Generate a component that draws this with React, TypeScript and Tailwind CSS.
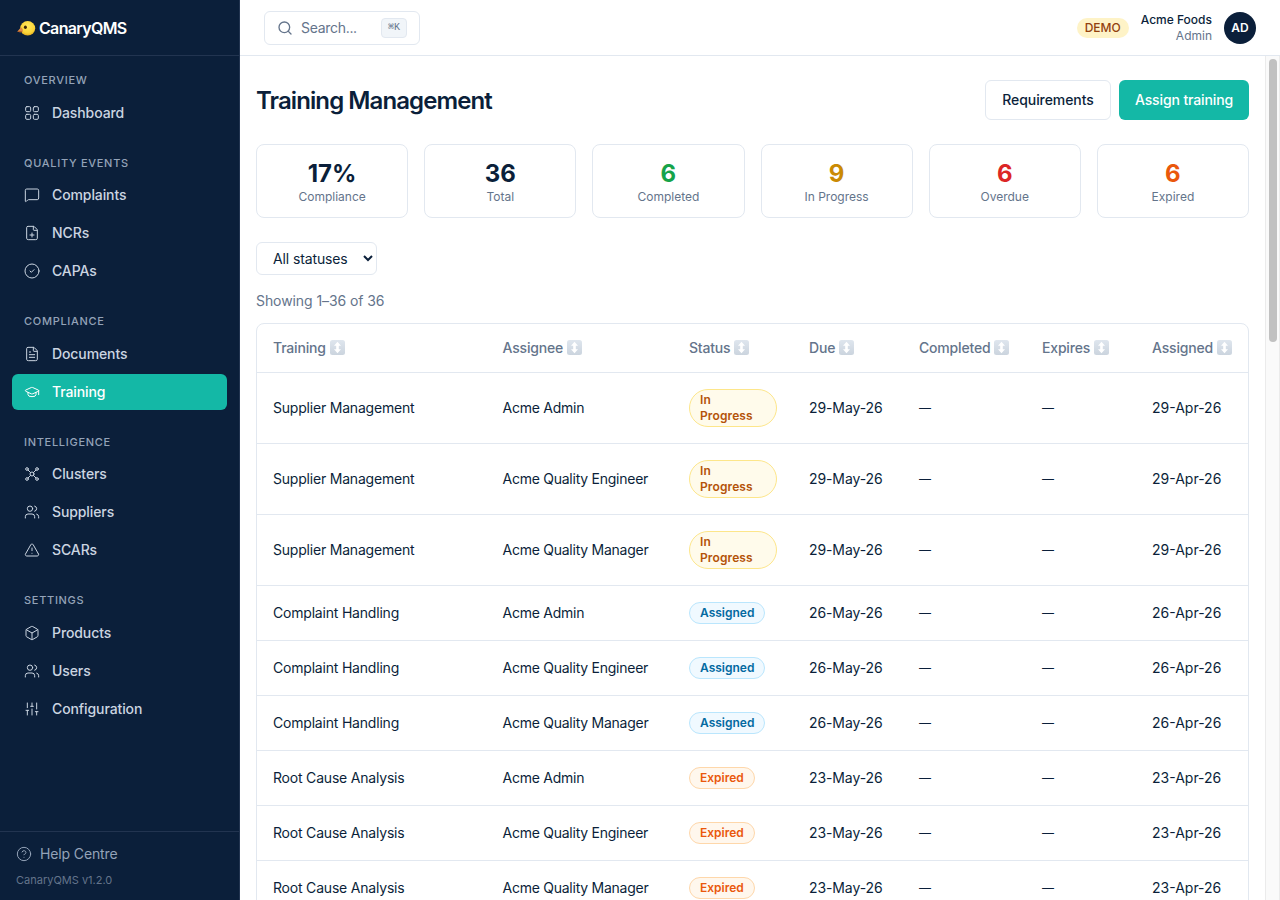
import type { ReactNode } from 'react'
import {
  Box,
  CircleHelp,
  FilePlus,
  FileText,
  GraduationCap,
  MessageSquare,
  Search,
  SlidersVertical,
  TriangleAlert,
  Users,
} from 'lucide-react'

type Status = 'In Progress' | 'Assigned' | 'Expired'

type IconProps = { className?: string }

function Icon({ className, children }: IconProps & { children: ReactNode }) {
  return (
    <svg
      viewBox="0 0 24 24"
      fill="none"
      stroke="currentColor"
      strokeWidth={1.5}
      strokeLinecap="round"
      strokeLinejoin="round"
      className={className}
    >
      {children}
    </svg>
  )
}

function DashboardIcon({ className }: IconProps) {
  return (
    <Icon className={className}>
      <rect x="2.5" y="2.5" width="7.5" height="7.5" rx="1.8" />
      <rect x="14" y="2.5" width="7.5" height="7.5" rx="1.8" />
      <rect x="2.5" y="14" width="7.5" height="7.5" rx="1.8" />
      <rect x="14" y="14" width="7.5" height="7.5" rx="1.8" />
    </Icon>
  )
}

function CheckIcon({ className }: IconProps) {
  return (
    <Icon className={className}>
      <circle cx="12" cy="12" r="10.5" />
      <path d="m9 12 2 2 4-4" />
    </Icon>
  )
}

function ClusterIcon({ className }: IconProps) {
  return (
    <Icon className={className}>
      <circle cx="12" cy="12" r="3" />
      <circle cx="4.5" cy="4.5" r="2" />
      <circle cx="19.5" cy="4.5" r="2" />
      <circle cx="4.5" cy="19.5" r="2" />
      <circle cx="19.5" cy="19.5" r="2" />
      <path d="m6 6 3.9 3.9M18 6l-3.9 3.9M6 18l3.9-3.9M18 18l-3.9-3.9" />
    </Icon>
  )
}

function CanaryLogo() {
  return (
    <svg viewBox="0 0 20 18" className="h-[18px] w-5 shrink-0">
      <defs>
        <radialGradient id="canary" cx="0.5" cy="0.35" r="0.72">
          <stop offset="0" stopColor="#ffe95c" />
          <stop offset="0.65" stopColor="#fbd437" />
          <stop offset="1" stopColor="#d99a14" />
        </radialGradient>
      </defs>
      <ellipse cx="11.7" cy="9.3" rx="7.5" ry="7.3" fill="url(#canary)" />
      <path d="M5 8.3C4.2 9.6 2.5 11.2 1.3 12.4C2.6 13.3 5.2 13.6 6.6 12.6C7.4 11.4 6.6 9.2 5 8.3Z" fill="#e08a45" />
      <path d="M1.3 12.4C3 12 5 12 6.6 12.6C5.2 13.6 2.6 13.3 1.3 12.4Z" fill="#b4602a" />
      <ellipse cx="9.4" cy="8.2" rx="1.5" ry="1.7" fill="#3a2408" />
    </svg>
  )
}

function SortIcon() {
  return (
    <svg viewBox="0 0 15 15" className="mb-px h-[15px] w-[15px] shrink-0">
      <defs>
        <linearGradient id="sort" x1="0" y1="0" x2="0" y2="1">
          <stop offset="0" stopColor="#dfe6ee" />
          <stop offset="1" stopColor="#cbd4de" />
        </linearGradient>
      </defs>
      <rect width="15" height="15" rx="2.5" fill="url(#sort)" />
      <path d="M7.5 1.8 11 5.8H8.8V9.2H11L7.5 13.2 4 9.2H6.2V5.8H4Z" fill="#fff" />
    </svg>
  )
}

const navGroups = [
  { title: 'Overview', items: [{ label: 'Dashboard', icon: DashboardIcon }] },
  {
    title: 'Quality Events',
    items: [
      { label: 'Complaints', icon: MessageSquare },
      { label: 'NCRs', icon: FilePlus },
      { label: 'CAPAs', icon: CheckIcon },
    ],
  },
  {
    title: 'Compliance',
    items: [
      { label: 'Documents', icon: FileText },
      { label: 'Training', icon: GraduationCap, active: true },
    ],
  },
  {
    title: 'Intelligence',
    items: [
      { label: 'Clusters', icon: ClusterIcon },
      { label: 'Suppliers', icon: Users },
      { label: 'SCARs', icon: TriangleAlert },
    ],
  },
  {
    title: 'Settings',
    items: [
      { label: 'Products', icon: Box },
      { label: 'Users', icon: Users },
      { label: 'Configuration', icon: SlidersVertical },
    ],
  },
]

const stats = [
  { value: '17%', label: 'Compliance', color: 'text-[#0b1f3a]' },
  { value: '36', label: 'Total', color: 'text-[#0b1f3a]' },
  { value: '6', label: 'Completed', color: 'text-[#16a34a]' },
  { value: '9', label: 'In Progress', color: 'text-[#ca8a04]' },
  { value: '6', label: 'Overdue', color: 'text-[#dc2626]' },
  { value: '6', label: 'Expired', color: 'text-[#ea580c]' },
]

const columns = ['Training', 'Assignee', 'Status', 'Due', 'Completed', 'Expires', 'Assigned']

const rows: { training: string; assignee: string; status: Status; due: string; assigned: string }[] = [
  { training: 'Supplier Management', assignee: 'Acme Admin', status: 'In Progress', due: '29-May-26', assigned: '29-Apr-26' },
  { training: 'Supplier Management', assignee: 'Acme Quality Engineer', status: 'In Progress', due: '29-May-26', assigned: '29-Apr-26' },
  { training: 'Supplier Management', assignee: 'Acme Quality Manager', status: 'In Progress', due: '29-May-26', assigned: '29-Apr-26' },
  { training: 'Complaint Handling', assignee: 'Acme Admin', status: 'Assigned', due: '26-May-26', assigned: '26-Apr-26' },
  { training: 'Complaint Handling', assignee: 'Acme Quality Engineer', status: 'Assigned', due: '26-May-26', assigned: '26-Apr-26' },
  { training: 'Complaint Handling', assignee: 'Acme Quality Manager', status: 'Assigned', due: '26-May-26', assigned: '26-Apr-26' },
  { training: 'Root Cause Analysis', assignee: 'Acme Admin', status: 'Expired', due: '23-May-26', assigned: '23-Apr-26' },
  { training: 'Root Cause Analysis', assignee: 'Acme Quality Engineer', status: 'Expired', due: '23-May-26', assigned: '23-Apr-26' },
  { training: 'Root Cause Analysis', assignee: 'Acme Quality Manager', status: 'Expired', due: '23-May-26', assigned: '23-Apr-26' },
]

const badgeStyles: Record<Status, string> = {
  'In Progress': 'border-[#fde68a] bg-[#fffbeb] text-[#b45309] tracking-[0.12px]',
  Assigned: 'border-[#bae6fd] bg-[#f0f9ff] text-[#0369a1]',
  Expired: 'border-[#fed7aa] bg-[#fff7ed] text-[#ea580c]',
}

const rowGrid = 'grid grid-cols-[229.5px_186.5px_120px_110px_123px_110px_112px] items-center'

function Sidebar() {
  return (
    <aside className="flex w-60 shrink-0 flex-col border-r border-[#223450] bg-[#0b1f3a]">
      <div className="flex h-14 shrink-0 items-center border-b border-[#223450] px-4">
        <CanaryLogo />
        <span className="pl-[3px] text-base font-semibold tracking-[-0.67px] text-white">CanaryQMS</span>
      </div>

      <nav className="flex flex-1 flex-col gap-6 px-3 py-4">
        {navGroups.map((group) => (
          <div key={group.title}>
            <p className="mb-1.5 px-3 text-[11px] leading-[16.5px] font-medium tracking-[0.7px] text-[#94a3b8] uppercase">
              {group.title}
            </p>
            <div className="flex flex-col gap-0.5">
              {group.items.map((item) => (
                <a
                  key={item.label}
                  className={`flex h-9 items-center gap-3 rounded-md px-3 text-sm font-medium tracking-[-0.1px] ${
                    'active' in item && item.active ? 'bg-[#14b8a6] text-white' : 'text-[#cbd5e1]'
                  }`}
                >
                  <item.icon strokeWidth={1.5} className="h-4 w-4 shrink-0" />
                  {item.label}
                </a>
              ))}
            </div>
          </div>
        ))}
      </nav>

      <div className="h-[69px] shrink-0 border-t border-[#223450] px-4 pt-3">
        <div className="flex items-center gap-2 text-sm leading-5 tracking-[-0.13px] text-[#94a3b8]">
          <CircleHelp strokeWidth={1.5} className="h-4 w-4" />
          Help Centre
        </div>
        <p className="mt-2 text-[11px] leading-[16.5px] text-[#64748b]">CanaryQMS v1.2.0</p>
      </div>
    </aside>
  )
}

function Header() {
  return (
    <header className="flex h-14 shrink-0 items-center justify-between border-b border-[#e2e8f0] px-6">
      <button className="flex h-[34px] w-[156px] items-center rounded-md border border-[#e2e8f0] px-3 text-sm text-[#64748b]">
        <Search className="h-4 w-4" />
        <span className="ml-2 tracking-[-0.3px]">Search...</span>
        <kbd className="ml-auto flex h-5 w-[26px] items-center justify-center rounded border border-[#e2e8f0] bg-[#f1f5f9] pt-0.5 font-['Liberation_Mono',monospace] text-[10px]">
          ⌘K
        </kbd>
      </button>

      <div className="flex items-center gap-3">
        <span className="rounded-full bg-[#fef3c7] px-2 py-0.5 text-xs font-medium text-[#92400e]">DEMO</span>
        <div className="text-right text-xs">
          <p className="font-medium">Acme Foods</p>
          <p className="text-[#64748b]">Admin</p>
        </div>
        <div className="flex h-8 w-8 items-center justify-center rounded-full bg-[#0b1f3a] text-xs font-semibold text-white">
          AD
        </div>
      </div>
    </header>
  )
}

function Badge({ status }: { status: Status }) {
  return (
    <span
      className={`inline-flex rounded-full border px-2.5 py-0.5 text-xs leading-4 font-semibold ${badgeStyles[status]}`}
    >
      {status}
    </span>
  )
}

export default function App() {
  return (
    <div className="flex h-[900px] w-[1280px] overflow-hidden bg-white font-['Inter',sans-serif] text-[#0b1f3a]">
      <Sidebar />

      <div className="flex min-w-0 flex-1 flex-col">
        <Header />

        <div className="flex min-h-0 flex-1">
          <main className="min-w-0 flex-1 overflow-hidden px-4 pt-6">
            <div className="flex items-center justify-between">
              <h1 className="pt-0.5 text-2xl font-semibold tracking-[-0.91px]">Training Management</h1>
              <div className="flex gap-2 text-sm font-medium">
                <button className="h-10 w-[126px] rounded-md border border-[#e2e8f0] tracking-[-0.07px]">
                  Requirements
                </button>
                <button className="h-10 w-[130px] rounded-md bg-[#14b8a6] tracking-[-0.12px] text-white">
                  Assign training
                </button>
              </div>
            </div>

            <div className="mt-6 grid grid-cols-6 gap-4">
              {stats.map((stat) => (
                <div
                  key={stat.label}
                  className="flex h-[74px] flex-col items-center rounded-lg border border-[#e2e8f0] pt-[13px]"
                >
                  <div className={`text-2xl font-bold ${stat.color}`}>{stat.value}</div>
                  <div className="-mt-px text-xs text-[#64748b]">{stat.label}</div>
                </div>
              ))}
            </div>

            <select className="mt-6 block h-[33px] w-[121px] rounded-md border border-[#e2e8f0] bg-white pl-3 text-sm tracking-[-0.12px]">
              <option>All statuses</option>
            </select>

            <p className="mt-4 text-sm tracking-[-0.08px] text-[#64748b]">Showing 1–36 of 36</p>

            <div className="mt-3 rounded-t-lg border border-[#e2e8f0] text-sm">
              <div className={`${rowGrid} h-[49px] border-b border-[#e2e8f0] font-medium tracking-[-0.18px] text-[#64748b]`}>
                {columns.map((column) => (
                  <div key={column} className="flex items-center gap-1 pl-4">
                    {column}
                    <SortIcon />
                  </div>
                ))}
              </div>

              {rows.map((row, i) => (
                <div key={i} className={`${rowGrid} border-b border-[#e2e8f0]`}>
                  <div className="px-4 tracking-[-0.2px]">{row.training}</div>
                  <div className="px-4 tracking-[-0.25px]">{row.assignee}</div>
                  <div className="flex px-4 py-4">
                    <Badge status={row.status} />
                  </div>
                  <div className="px-4 tracking-[-0.1px]">{row.due}</div>
                  <div className="px-4 text-xs font-medium">—</div>
                  <div className="px-4 text-xs font-medium">—</div>
                  <div className="px-4">{row.assigned}</div>
                </div>
              ))}
            </div>
          </main>

          <div className="flex w-[15px] shrink-0 justify-center border-x border-[#ebebeb] bg-[#fafafa] pt-[3px]">
            <div className="h-[283px] w-2 rounded-full bg-[#c1c1c1]" />
          </div>
        </div>
      </div>
    </div>
  )
}
